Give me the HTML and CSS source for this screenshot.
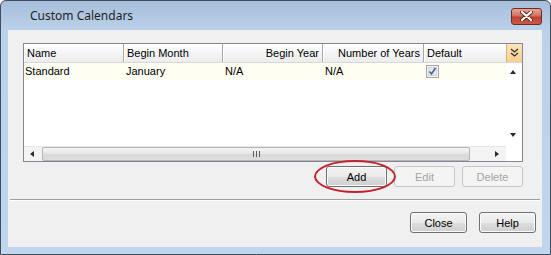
FILE: index.html
```html
<!DOCTYPE html>
<html lang="en">

<head>
  <title>Custom Calendars</title>
  <meta charset="utf-8">
  <link rel="stylesheet" href="styles.css">
</head>

<body>
  <div class="window">
    <div class="titlebar">
      <span class="title">Custom Calendars</span>
      <button class="close-x" aria-label="Close">
        <svg width="13" height="10" viewBox="0 0 13 10">
          <path d="M2 1 L11 9 M11 1 L2 9" stroke="#5a2a22" stroke-width="4" stroke-linecap="round" />
          <path d="M2 1 L11 9 M11 1 L2 9" stroke="#ffffff" stroke-width="2.2" stroke-linecap="round" />
        </svg>
      </button>
    </div>

    <div class="client">
      <div class="grid">
        <div class="header">
          <div class="col c-name">Name</div>
          <div class="col c-month">Begin Month</div>
          <div class="col c-year right">Begin Year</div>
          <div class="col c-count right">Number of Years</div>
          <div class="col c-default">Default</div>
        </div>
        <div class="chooser">
          <svg width="9" height="10" viewBox="0 0 9 10">
            <path d="M1 1 L4.5 4 L8 1 M1 5 L4.5 8 L8 5" fill="none" stroke="#333" stroke-width="1.3" />
          </svg>
        </div>

        <div class="rows">
          <div class="row">
            <div class="col c-name">Standard</div>
            <div class="col c-month">January</div>
            <div class="col c-year">N/A</div>
            <div class="col c-count">N/A</div>
            <div class="col c-default">
              <svg class="check" width="13" height="13" viewBox="0 0 13 13">
                <rect x="0.5" y="0.5" width="12" height="12" fill="#f4f4f4" stroke="#a6a6a6" />
                <rect x="2.5" y="2.5" width="8" height="8" fill="#e6e9ee" stroke="#d0d4da" />
                <path d="M3.5 6.5 L5.5 9 L9.5 3" fill="none" stroke="#4a5e90" stroke-width="1.6" />
              </svg>
            </div>
          </div>
        </div>

        <div class="vscroll">
          <span class="arrow up"></span>
          <span class="arrow down"></span>
        </div>

        <div class="hscroll">
          <span class="arrow left"></span>
          <div class="thumb">
            <svg class="grip" width="7" height="6" viewBox="0 0 7 6">
              <path d="M0.5 0 V6 M3.5 0 V6 M6.5 0 V6" stroke="#5c5c5c" stroke-width="1" />
            </svg>
          </div>
          <span class="arrow right"></span>
        </div>
        <div class="corner"></div>
      </div>

      <div class="actions">
        <div class="highlight">
          <button class="btn">Add</button>
          <span class="ring"></span>
        </div>
        <button class="btn" disabled>Edit</button>
        <button class="btn" disabled>Delete</button>
      </div>

      <div class="separator"></div>

      <div class="footer">
        <button class="btn small">Close</button>
        <button class="btn small">Help</button>
      </div>
    </div>
  </div>
</body>

</html>
```

FILE: styles.css
```css
* {
  box-sizing: border-box;
}

body {
  margin: 0;
  background: #ffffff;
  font-family: "Liberation Sans", Arial, sans-serif;
  font-size: 11px;
  color: #000000;
}

.window {
  width: 551px;
  height: 255px;
  border: 1px solid #3f4d5c;
  border-radius: 6px 6px 0 0;
  background: linear-gradient(#a6bedb, #bcd2ea 30px, #c0d6ee);
}

.titlebar {
  height: 29px;
  display: flex;
  align-items: center;
  justify-content: space-between;
  padding: 0 8px 0 29px;
}

.title {
  font-family: "Noto Sans", "Liberation Sans", sans-serif;
  font-size: 12px;
  color: #1e1e1e;
}

.close-x {
  width: 31px;
  height: 17px;
  margin-top: 1px;
  padding: 0;
  border: 1px solid #6e2a22;
  border-radius: 3px;
  background: linear-gradient(#e7a698, #d2705f 45%, #c0402f 55%, #cc5a44);
  display: flex;
  align-items: center;
  justify-content: center;
}

.client {
  width: 534px;
  height: 217px;
  margin-left: 7px;
  padding-top: 13px;
  background: #f0f0f0;
}

/* table */

.grid {
  width: 500px;
  height: 119px;
  margin-left: 15px;
  border: 1px solid #828790;
  background: #ffffff;
  display: grid;
  grid-template-columns: 482px 16px;
  grid-template-rows: 19px 83px 15px;
}

.header {
  display: flex;
  background: linear-gradient(#ffffff, #f3f3f3 60%, #ececec);
  border-bottom: 1px solid #d8d8d8;
}

.header .col {
  border-right: 1px solid #a8a8a8;
  box-shadow: inset 1px 0 #ffffff;
  line-height: 18px;
  padding: 0 3px;
}

.col {
  white-space: nowrap;
  overflow: hidden;
}

.right {
  text-align: right;
}

.c-name {
  width: 100px;
}

.c-month {
  width: 99px;
}

.c-year {
  width: 100px;
}

.c-count {
  width: 101px;
}

.c-default {
  width: 82px;
}

.header .c-default {
  border-right: none;
}

.chooser {
  background: linear-gradient(#fde4bd, #f9cf8e);
  border-left: 1px solid #d9b57d;
  border-bottom: 1px solid #d8d8d8;
  display: flex;
  align-items: center;
  justify-content: center;
}

.rows {
  background: #ffffff;
}

.row {
  display: flex;
  height: 17px;
  line-height: 17px;
  background: #fefef3;
}

.row .col {
  padding: 0 2px;
}

.row .c-name {
  padding-left: 1px;
}

.check {
  display: block;
  margin-top: 2px;
}

/* scroll bars */

.vscroll {
  position: relative;
  background: #ffffff;
}

.arrow {
  position: absolute;
  width: 0;
  height: 0;
  border: 3px solid transparent;
}

.up {
  left: 4px;
  top: 7px;
  border-bottom: 4px solid #2a2a2a;
  border-top: 0;
}

.down {
  left: 4px;
  bottom: 9px;
  border-top: 4px solid #2a2a2a;
  border-bottom: 0;
}

.hscroll {
  position: relative;
  background: #f4f4f4;
  border-top: 1px solid #e6e6e6;
}

.left {
  left: 6px;
  top: 4px;
  border-right: 4px solid #2a2a2a;
  border-left: 0;
}

.arrow.right {
  right: 7px;
  top: 4px;
  border-left: 4px solid #2a2a2a;
  border-right: 0;
}

.thumb {
  position: absolute;
  left: 18px;
  right: 36px;
  top: 0;
  bottom: 0;
  border: 1px solid #b5b5b5;
  border-radius: 2px;
  background: linear-gradient(#f5f5f5, #e6e6e6 50%, #d9d9d9 51%, #dedede);
  display: flex;
  align-items: center;
  justify-content: center;
}

.grip {
  display: block;
}

.corner {
  background: #ffffff;
}

/* buttons */

.actions {
  display: flex;
  justify-content: flex-end;
  gap: 7px;
  margin-top: 4px;
  padding-right: 19px;
}

.btn {
  width: 61px;
  height: 21px;
  padding: 0;
  border: 1px solid #707070;
  border-radius: 3px;
  background: linear-gradient(#f2f2f2, #ebebeb 50%, #dddddd 51%, #cfcfcf);
  box-shadow: inset 0 0 0 1px #fbfbfb;
  font-family: "Liberation Sans", Arial, sans-serif;
  font-size: 11px;
  color: #000000;
}

.btn:disabled {
  border-color: #c6c6c6;
  background: #f4f4f4;
  box-shadow: none;
  color: #a3a3a3;
}

.highlight {
  position: relative;
}

.ring {
  position: absolute;
  left: -12px;
  top: -6px;
  width: 82px;
  height: 33px;
  border: 2px solid #c3242c;
  border-radius: 50%;
}

.separator {
  margin: 12px 2px 0 2px;
  border-top: 1px solid #a0a0a0;
  border-bottom: 1px solid #ffffff;
}

.footer {
  display: flex;
  justify-content: flex-end;
  gap: 12px;
  margin-top: 11px;
  padding-right: 6px;
}

.btn.small {
  width: 57px;
}
```
